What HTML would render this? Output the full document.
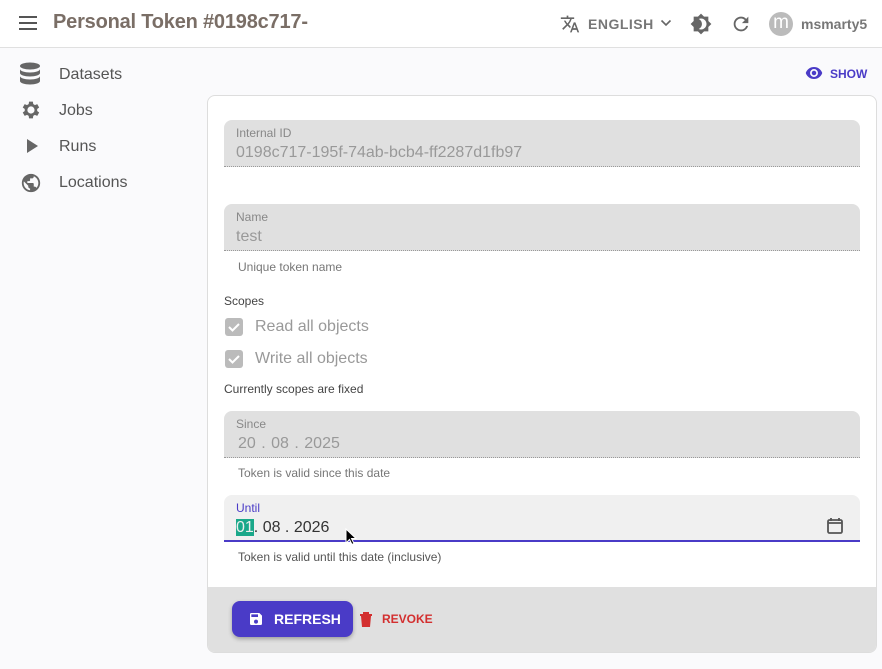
<!DOCTYPE html>
<html><head><style>
*{box-sizing:border-box;margin:0;padding:0}
body{width:882px;height:669px;background:#fafafc;font-family:"Liberation Sans",sans-serif;position:relative;overflow:hidden;color:#333}
.hdr{position:absolute;left:0;top:0;width:882px;height:48px;background:#fff;border-bottom:1px solid #e0e0e0}
.abs{position:absolute}
.title{left:53px;top:11px;font-size:20px;color:#7a6e66;font-weight:bold;letter-spacing:-.2px}
.nav{left:59px;font-size:16px;color:#555}
.card{left:207px;top:95px;width:670px;height:558px;background:#fff;border:1px solid #ddd;border-radius:8px;overflow:hidden}
.fld{position:absolute;left:16px;width:636px;height:47px;background:#e0e0e0;border-radius:8px 8px 0 0;border-bottom:1px dotted #999}
.lbl{position:absolute;left:12px;top:6px;font-size:12px;color:#888}
.val{position:absolute;left:12px;top:24px;font-size:16px;color:#999}
.hint{position:absolute;left:30px;font-size:12px;color:#777}
.cb{position:absolute;left:17px;width:18px;height:18px;background:#bbb;border-radius:3px}
</style></head><body>
<div class="hdr"></div>
<svg class="abs" style="left:18px;top:15px" width="20" height="16" viewBox="0 0 20 16"><path d="M1 2h18M1 8h18M1 14h18" stroke="#555" stroke-width="2"/></svg>
<div class="abs title">Personal Token #0198c717-</div>
<svg class="abs" style="left:560px;top:14px" width="20" height="20" viewBox="0 0 24 24"><path fill="#666" d="M12.87 15.07l-2.54-2.51.03-.03A17.5 17.5 0 0014.07 6H17V4h-7V2H8v2H1v2h11.17C11.5 7.92 10.44 9.75 9 11.35 8.07 10.32 7.3 9.19 6.69 8h-2c.73 1.63 1.73 3.17 2.98 4.56l-5.09 5.02L4 19l5-5 3.11 3.11.76-2.04zM18.5 10h-2L12 22h2l1.12-3h4.75L21 22h2l-4.5-12zm-2.62 7l1.62-4.33L19.12 17h-3.24z"/></svg>
<div class="abs" style="left:588px;top:16px;font-size:14px;font-weight:bold;color:#777;letter-spacing:.5px">ENGLISH</div>
<svg class="abs" style="left:660px;top:19px" width="12" height="8" viewBox="0 0 12 8"><path d="M1.5 1.5l4.5 4.5 4.5-4.5" stroke="#666" stroke-width="1.6" fill="none"/></svg>
<svg class="abs" style="left:690px;top:13px" width="22" height="22" viewBox="0 0 24 24"><path fill="#666" d="M20 8.69V4h-4.69L12 .69 8.69 4H4v4.69L.69 12 4 15.31V20h4.69L12 23.31 15.31 20H20v-4.69L23.31 12 20 8.69zM12 18c-.89 0-1.74-.2-2.5-.55C11.56 16.5 13 14.42 13 12s-1.44-4.5-3.5-5.45C10.26 6.2 11.11 6 12 6c3.31 0 6 2.69 6 6s-2.69 6-6 6z"/></svg>
<svg class="abs" style="left:730px;top:13px" width="22" height="22" viewBox="0 0 24 24"><path fill="#666" d="M17.65 6.35A7.958 7.958 0 0012 4c-4.42 0-7.99 3.58-7.99 8s3.57 8 7.99 8c3.73 0 6.84-2.55 7.73-6h-2.08A5.99 5.99 0 0112 18c-3.31 0-6-2.69-6-6s2.69-6 6-6c1.66 0 3.14.69 4.22 1.78L13 11h7V4l-2.35 2.35z"/></svg>
<div class="abs" style="left:769px;top:12px;width:24px;height:24px;border-radius:50%;background:#bbb;color:#fff;font-size:19px;text-align:center;line-height:22px">m</div>
<div class="abs" style="left:801px;top:16px;font-size:14px;font-weight:bold;color:#777">msmarty5</div>

<svg class="abs" style="left:19px;top:62px" width="22" height="24" viewBox="0 0 22 24"><ellipse cx="11" cy="4" rx="10" ry="3.5" fill="#666"/><path d="M1 7c0 2 4.5 3.5 10 3.5S21 9 21 7v4c0 2-4.5 3.5-10 3.5S1 13 1 11zM1 14c0 2 4.5 3.5 10 3.5S21 16 21 14v5c0 2-4.5 3.5-10 3.5S1 21 1 19z" fill="#666"/></svg>
<div class="abs nav" style="top:66px">Datasets</div>
<svg class="abs" style="left:19px;top:98px" width="24" height="24" viewBox="0 0 24 24"><path fill="#666" d="M19.14 12.94a7.07 7.07 0 000-1.88l2.03-1.58-1.92-3.32-2.39.96a7 7 0 00-1.62-.94L14.88 3.6h-3.84l-.36 2.58c-.59.24-1.13.56-1.62.94l-2.39-.96-1.92 3.32 2.03 1.58a7.07 7.07 0 000 1.88l-2.03 1.58 1.92 3.32 2.390-.96c.49.38 1.030.7 1.620.94l.36 2.58h3.84l.36-2.58c.59-.24 1.13-.56 1.62-.94l2.39.96 1.92-3.32-2.03-1.58zM12.96 15.6a3.6 3.6 0 110-7.2 3.6 3.6 0 010 7.2z" transform="translate(-1,0)"/></svg>
<div class="abs nav" style="top:102px">Jobs</div>
<svg class="abs" style="left:26px;top:139px" width="12" height="14" viewBox="0 0 12 14"><path d="M1 0l11 7-11 7z" fill="#666"/></svg>
<div class="abs nav" style="top:138px">Runs</div>
<svg class="abs" style="left:20px;top:172px" width="22" height="22" viewBox="0 0 24 24"><path fill="#666" d="M12 2C6.48 2 2 6.480 2 12s4.48 10 10 10 10-4.48 10-10S17.52 2 12 2zm-1 17.93c-3.95-.49-7-3.85-7-7.93 0-.62.08-1.21.21-1.79L9 15v1c0 1.1.9 2 2 2v1.93zm6.9-2.54c-.26-.81-1-1.39-1.9-1.390h-1v-3c0-.55-.45-1-1-1H8v-2h2c.55 0 1-.45 1-1V7h2c1.1 0 2-.9 2-2v-.41c2.93 1.19 5 4.06 5 7.41 0 2.08-.8 3.97-2.1 5.39z"/></svg>
<div class="abs nav" style="top:174px">Locations</div>

<svg class="abs" style="left:805px;top:66px" width="18" height="14" viewBox="0 0 24 18"><path fill="#4a3bc7" d="M12 1C7 1 2.7 4.1 1 9c1.7 4.9 6 8 11 8s9.3-3.1 11-8c-1.7-4.9-6-8-11-8zm0 13.3A5.3 5.3 0 1112 3.7a5.3 5.3 0 010 10.6zM12 6a3 3 0 100 6 3 3 0 000-6z"/></svg>
<div class="abs" style="left:830px;top:67px;font-size:12px;font-weight:bold;color:#4a3bc7">SHOW</div>

<div class="abs card">
 <div class="fld" style="top:24px"><div class="lbl">Internal ID</div><div class="val">0198c717-195f-74ab-bcb4-ff2287d1fb97</div></div>
 <div class="fld" style="top:108px"><div class="lbl">Name</div><div class="val">test</div></div>
 <div class="hint" style="top:164px">Unique token name</div>
 <div class="abs" style="left:16px;top:198px;font-size:12px;color:#444">Scopes</div>
 <div class="cb" style="top:222px"><svg width="18" height="18" viewBox="0 0 18 18"><path d="M4 9l3.5 3.5L14 6" stroke="#fff" stroke-width="2" fill="none"/></svg></div>
 <div class="abs" style="left:47px;top:222px;font-size:16px;color:#999">Read all objects</div>
 <div class="cb" style="top:254px"><svg width="18" height="18" viewBox="0 0 18 18"><path d="M4 9l3.5 3.5L14 6" stroke="#fff" stroke-width="2" fill="none"/></svg></div>
 <div class="abs" style="left:47px;top:254px;font-size:16px;color:#999">Write all objects</div>
 <div class="abs" style="left:16px;top:286px;font-size:12px;color:#444">Currently scopes are fixed</div>
 <div class="fld" style="top:315px"><div class="lbl">Since</div><div class="val" style="left:14px">20<span style="letter-spacing:1px"> .</span> 08<span style="letter-spacing:1px"> .</span> 2025</div></div>
 <div class="hint" style="top:370px">Token is valid since this date</div>
 <div class="fld" style="top:399px;background:#f0f0f0;border-bottom:2px solid #4a3bc7"><div class="lbl" style="color:#4a3bc7">Until</div><div class="val" style="color:#333"><span style="background:#1aa88a;color:#eee">01</span>. 08 . 2026</div>
 <svg class="abs" style="left:602px;top:22px" width="18" height="18" viewBox="0 0 18 18"><rect x="2" y="3" width="14" height="13" rx="1.5" fill="none" stroke="#555" stroke-width="1.8"/><path d="M2 6h14M5 1v3M13 1v3" stroke="#555" stroke-width="1.8"/></svg></div>
 <div class="hint" style="top:454px;color:#555">Token is valid until this date (inclusive)</div>
 <div class="abs" style="left:0;top:491px;width:670px;height:67px;background:#e0e0e0"></div>
 <div class="abs" style="left:24px;top:505px;width:121px;height:36px;background:#4a3bc7;border-radius:8px;box-shadow:0 2px 4px rgba(0,0,0,.3)">
  <svg class="abs" style="left:16px;top:10px" width="16" height="16" viewBox="0 0 24 24"><path fill="#fff" d="M17 3H5a2 2 0 00-2 2v14a2 2 0 002 2h14a2 2 0 002-2V7l-4-4zm-5 16a3 3 0 110-6 3 3 0 010 6zm3-10H5V5h10v4z"/></svg>
  <div class="abs" style="left:42px;top:10px;font-size:14px;font-weight:bold;color:#fff">REFRESH</div></div>
 <svg class="abs" style="left:151px;top:515px" width="14" height="16" viewBox="0 0 14 16"><path fill="#d32f2f" d="M1 3h12v2H1zM4 1h6v2H4zM2 5h10l-1 11H3z"/></svg>
 <div class="abs" style="left:174px;top:516px;font-size:12px;font-weight:bold;color:#d32f2f">REVOKE</div>
</div>
<svg class="abs" style="left:345px;top:528px" width="12" height="18" viewBox="0 0 12 18"><path d="M1 1v14l3.5-3.5 2.5 5 2-1-2.5-5H11z" fill="#000" stroke="#fff" stroke-width="1"/></svg>
</body></html>
